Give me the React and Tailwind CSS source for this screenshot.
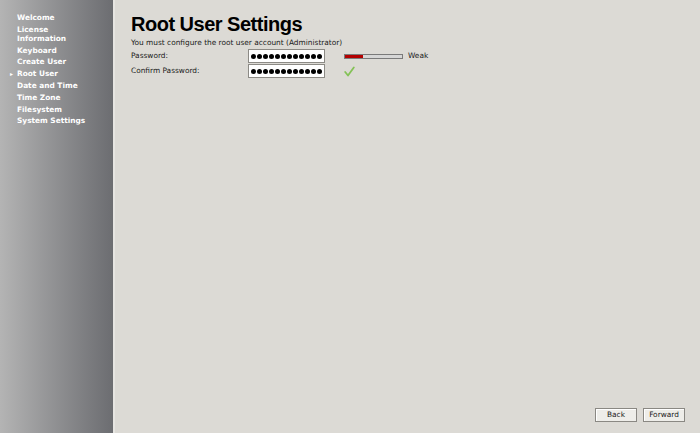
export default function App() {
  const items = ['Welcome', 'License Information', 'Keyboard', 'Create User', 'Root User', 'Date and Time', 'Time Zone', 'Filesystem', 'System Settings'];
  const dots = Array.from({ length: 12 });
  return (
    <div className="flex h-[433px] w-[700px] overflow-hidden bg-[#dcdad5] text-[#1a1a1a]" style={{ fontFamily: '"DejaVu Sans", sans-serif' }}>
      <div className="flex w-[115px] shrink-0 flex-col bg-gradient-to-r from-[#b4b4b4] to-[#6c6d71] pt-[13px] border-r-2 border-[#e6e5e1]">
        {items.map((it) => (
          <div key={it} className="relative pl-[17px] pr-2 text-[7.4px] font-bold leading-[9px] text-white mb-[2.8px]">
            {it === 'Root User' && <span className="absolute left-[10px] top-0 text-[6px]">▸</span>}
            {it === 'License Information' ? <>License<br />Information</> : it}
          </div>
        ))}
      </div>
      <div className="relative flex flex-1 flex-col pl-[16px] pt-[12px]">
        <h1 className="text-[20px] font-bold leading-[25px] tracking-[-0.5px] text-black" style={{ fontFamily: '"Liberation Sans", Arial, sans-serif' }}>Root User Settings</h1>
        <div className="mt-[1px] text-[7.4px] leading-[10px]">You must configure the root user account (Administrator)</div>
        <div className="flex items-center h-[14px] mt-[1px]">
          <div className="w-[117px] text-[7.4px]">Password:</div>
          <div className="flex h-[14px] w-[77px] items-center gap-[1px] border border-[#8c8a85] bg-white pl-[2px]">
            {dots.map((_, i) => <span key={i} className="h-[5px] w-[5px] rounded-full bg-black" />)}
          </div>
          <div className="ml-[19px] flex h-[5px] w-[59px] border border-[#7a7a7a] bg-[#d6d6d6]">
            <div className="h-full w-[18px] bg-[#b30000]" />
          </div>
          <div className="ml-[5px] text-[7.4px]">Weak</div>
        </div>
        <div className="flex items-center h-[14px] mt-[1px]">
          <div className="w-[117px] text-[7.4px]">Confirm Password:</div>
          <div className="flex h-[14px] w-[77px] items-center gap-[1px] border border-[#8c8a85] bg-white pl-[2px]">
            {dots.map((_, i) => <span key={i} className="h-[5px] w-[5px] rounded-full bg-black" />)}
          </div>
          <svg className="ml-[19px]" width="11" height="11" viewBox="0 0 11 11">
            <path d="M1.2 6 L4 9.5 L9.8 1.5" fill="none" stroke="#84c257" strokeWidth="1.8" strokeLinecap="round" strokeLinejoin="round" />
          </svg>
        </div>
        <div className="mt-auto mb-[11px] flex justify-end gap-[6px] pr-[15px]">
          <button className="h-[14px] w-[42px] border border-[#8a8883] bg-[#eeede9] text-[7.4px] leading-none shadow-[inset_1px_1px_0_#fff]">Back</button>
          <button className="h-[14px] w-[42px] border border-[#8a8883] bg-[#eeede9] text-[7.4px] leading-none shadow-[inset_1px_1px_0_#fff]">Forward</button>
        </div>
      </div>
    </div>
  );
}
